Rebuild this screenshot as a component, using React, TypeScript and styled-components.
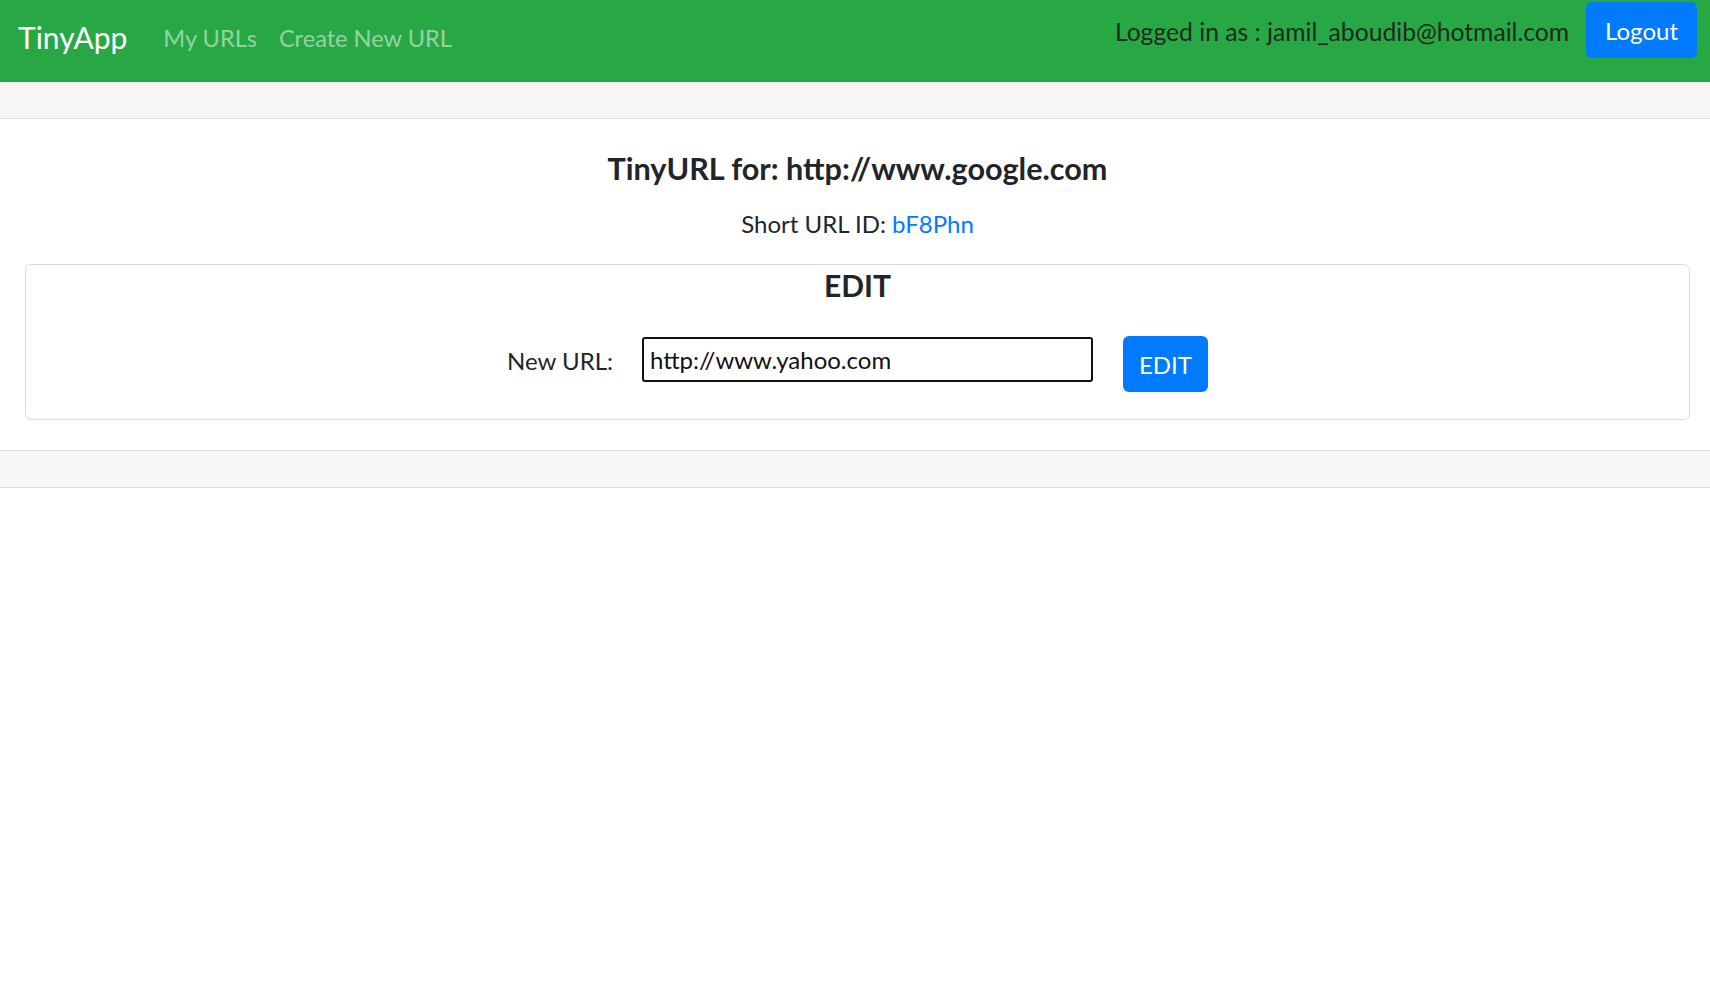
import styled, { createGlobalStyle } from "styled-components"

const GlobalStyle = createGlobalStyle`
    html, body {
        margin: 0;
        padding: 0;
        background: #ffffff;
        font-family: "Lato", "Noto Sans", sans-serif;
        color: #212529;
    }
`

export default function App() {
    return (
        <>
            <GlobalStyle />
            <Navbar>
                <NavLeft>
                    <Brand href="#">TinyApp</Brand>
                    <NavLink href="#">My URLs</NavLink>
                    <NavLink href="#">Create New URL</NavLink>
                </NavLeft>
                <NavRight>
                    <LoggedText>Logged in as : jamil_aboudib@hotmail.com</LoggedText>
                    <Button type="button" $padX={19}>
                        Logout
                    </Button>
                </NavRight>
            </Navbar>
            <Card>
                <CardHeader />
                <CardBody>
                    <Title>TinyURL for: http://www.google.com</Title>
                    <ShortId>
                        Short URL ID: <Link href="#">bF8Phn</Link>
                    </ShortId>
                    <EditCard>
                        <EditTitle>EDIT</EditTitle>
                        <EditForm onSubmit={(e) => e.preventDefault()}>
                            <Label htmlFor="longURL">New URL:</Label>
                            <UrlInput
                                id="longURL"
                                type="text"
                                defaultValue="http://www.yahoo.com"
                            />
                            <Button type="submit" $padX={16}>
                                EDIT
                            </Button>
                        </EditForm>
                    </EditCard>
                </CardBody>
                <CardFooter />
            </Card>
        </>
    )
}

const Navbar = styled.nav`
    display: flex;
    justify-content: space-between;
    align-items: flex-start;
    height: 82px;
    padding: 0 13px 0 18px;
    background: #28a745;
    box-sizing: border-box;
`

const NavLeft = styled.div`
    display: flex;
    align-items: center;
    height: 75px;
    gap: 22px;
`

const Brand = styled.a`
    font-size: 30px;
    line-height: 45px;
    color: #ffffff;
    text-decoration: none;
    margin-right: 14px;
`

const NavLink = styled.a`
    font-size: 23.6px;
    line-height: 36px;
    color: rgba(255, 255, 255, 0.5);
    text-decoration: none;
`

const NavRight = styled.div`
    display: flex;
    align-items: center;
    gap: 17px;
    margin-top: 2px;
`

const LoggedText = styled.span`
    font-size: 24.7px;
    line-height: 36px;
    padding-top: 4px;
    color: #1d2b21;
`

const Button = styled.button<{ $padX: number }>`
    height: 56px;
    padding: 0 ${(p) => p.$padX}px;
    border: none;
    border-radius: 6px;
    background: #007bff;
    color: #ffffff;
    font-family: inherit;
    font-size: 24px;
    cursor: pointer;
`

const Card = styled.div`
    display: flex;
    flex-direction: column;
`

const CardHeader = styled.div`
    height: 36px;
    background: #f7f7f7;
    border-bottom: 1px solid #dfdfdf;
`

const CardBody = styled.div`
    display: flex;
    flex-direction: column;
    align-items: stretch;
    padding: 32px 20px 30px 25px;
`

const Title = styled.h5`
    margin: 0;
    font-size: 30.6px;
    line-height: 36px;
    font-weight: 700;
    text-align: center;
    color: #212529;
`

const ShortId = styled.p`
    margin: 19px 0 22px;
    font-size: 24px;
    line-height: 36px;
    text-align: center;
`

const Link = styled.a`
    color: #007bff;
    text-decoration: none;
`

const EditCard = styled.div`
    display: flex;
    flex-direction: column;
    align-items: center;
    padding: 2px 0 27px;
    border: 1px solid #dcdcdc;
    border-radius: 6px;
`

const EditTitle = styled.h5`
    margin: 0;
    font-size: 30px;
    line-height: 36px;
    font-weight: 700;
`

const EditForm = styled.form`
    display: flex;
    align-items: flex-start;
    margin-top: 33px;
`

const Label = styled.label`
    margin-top: 7px;
    margin-right: 29px;
    font-size: 24px;
    line-height: 36px;
`

const UrlInput = styled.input`
    width: 451px;
    height: 45px;
    margin-top: 1px;
    margin-right: 30px;
    padding: 0 6px;
    box-sizing: border-box;
    border: 2px solid #111111;
    border-radius: 3px;
    font-family: inherit;
    font-size: 24px;
    color: #111111;
    outline: none;
`

const CardFooter = styled.div`
    height: 36px;
    background: #f7f7f7;
    border-top: 1px solid #dfdfdf;
    border-bottom: 1px solid #dfdfdf;
`
